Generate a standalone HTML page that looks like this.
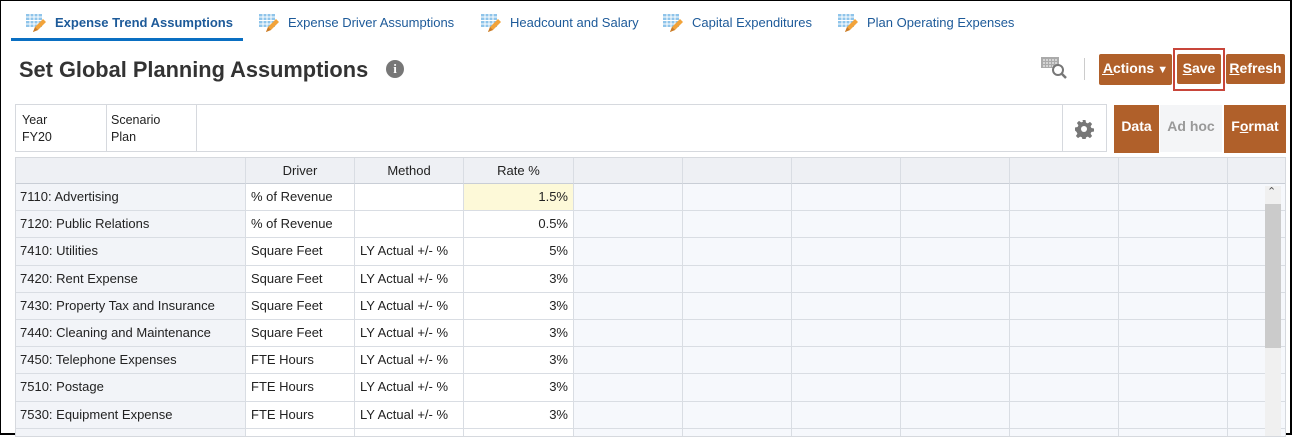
<!DOCTYPE html><html><head><style>
*{box-sizing:border-box}body{margin:0;width:1292px;height:435px;overflow:hidden;font-family:"Liberation Sans",Arial,sans-serif;background:#fff;position:relative}
.frame{position:absolute;left:0;top:0;width:1292px;height:435px;border:1px solid #000;border-right:2px solid #000;border-bottom:2px solid #000;}
.tab{position:absolute;top:15px;font-size:13px;color:#1d5a99;white-space:nowrap}
.tab svg{position:absolute;left:0;top:-4px}
.tab span{position:absolute;left:30px;top:0}
.ab{position:absolute;background:#b0602a;color:#fff;font-weight:bold;font-size:14px;border-radius:2px;text-align:center;line-height:29px}
.ab u{text-decoration:underline}
.g{position:absolute;font-size:12.5px;color:#222}
.c{position:absolute;border-right:1px solid #d9dde3;border-bottom:1px solid #d9dde3;font-size:13px;color:#222;padding:0 5px;line-height:26px;white-space:nowrap;overflow:hidden}
</style></head><body>
<div class="frame"></div>
<svg width="0" height="0" style="position:absolute"><defs><g id="ic"><rect x="1" y="3" width="16" height="13" fill="#8fc4ea"/><path d="M1 6h16M1 9.5h16M1 13h16M5 3v13M9 3v13M13 3v13" stroke="#fff" stroke-width="1"/><path d="M8 21l2-5 8-8 3 3-8 8z" fill="#f2a33a"/><path d="M8 21l2-5 3 3z" fill="#c97c2a"/></g></defs></svg>
<div class="tab" style="left:25px;font-weight:bold"><svg width="22" height="22"><use href="#ic"/></svg><span>Expense Trend Assumptions</span></div>
<div style="position:absolute;left:11px;top:38px;width:232px;height:3px;background:#0a6fc2"></div>
<div class="tab" style="left:258px"><svg width="22" height="22"><use href="#ic"/></svg><span>Expense Driver Assumptions</span></div>
<div class="tab" style="left:480px"><svg width="22" height="22"><use href="#ic"/></svg><span>Headcount and Salary</span></div>
<div class="tab" style="left:662px"><svg width="22" height="22"><use href="#ic"/></svg><span>Capital Expenditures</span></div>
<div class="tab" style="left:837px"><svg width="22" height="22"><use href="#ic"/></svg><span>Plan Operating Expenses</span></div>
<div style="position:absolute;left:19px;top:57px;font-size:21.8px;font-weight:bold;color:#333">Set Global Planning Assumptions</div>
<div style="position:absolute;left:386px;top:60px;width:18px;height:18px;border-radius:50%;background:#777;color:#fff;font-weight:bold;font-size:13px;text-align:center;line-height:18px;font-family:'Liberation Serif',serif">i</div>
<svg style="position:absolute;left:1040px;top:55px" width="30" height="26"><rect x="1" y="2" width="18" height="11" fill="#aaa"/><path d="M3 5h14M3 8h14M3 11h10" stroke="#fff" stroke-dasharray="2 1"/><circle cx="18" cy="15" r="5" fill="#fff" stroke="#777" stroke-width="2"/><path d="M21 18l5 5" stroke="#777" stroke-width="2.5"/></svg>
<div style="position:absolute;left:1084px;top:58px;width:1px;height:22px;background:#ccc"></div>
<div class="ab" style="left:1099px;top:54px;width:73px">Actions<span style="font-size:11px"> ▼</span></div>
<div style="position:absolute;left:1102px;top:74px;width:12px;height:1px;background:#fff"></div>
<div style="position:absolute;left:1173px;top:48px;width:52px;height:43px;border:2px solid #c8453a"></div>
<div class="ab" style="left:1177px;top:54px;width:44px;height:30px"><u>S</u>ave</div>
<div class="ab" style="left:1226px;top:54px;width:59px;height:30px"><u>R</u>efresh</div>
<div style="position:absolute;left:15px;top:104px;width:1092px;height:48px;border:1px solid #d6d9de"></div>
<div style="position:absolute;left:106px;top:105px;width:1px;height:46px;background:#d6d9de"></div>
<div style="position:absolute;left:196px;top:105px;width:1px;height:46px;background:#d6d9de"></div>
<div style="position:absolute;left:1062px;top:105px;width:1px;height:46px;background:#d6d9de"></div>
<div class="g" style="left:22px;top:113px">Year</div><div class="g" style="left:22px;top:130px">FY20</div>
<div class="g" style="left:111px;top:113px">Scenario</div><div class="g" style="left:111px;top:130px">Plan</div>
<svg style="position:absolute;left:1074px;top:119px" width="20" height="20" viewBox="0 0 20 20"><path fill="#777" d="M8.5 1h3l.5 2.6 1.8.8 2.2-1.5 2.1 2.1-1.5 2.2.8 1.8 2.6.5v3l-2.6.5-.8 1.8 1.5 2.2-2.1 2.1-2.2-1.5-1.8.8-.5 2.6h-3l-.5-2.6-1.8-.8-2.2 1.5-2.1-2.1 1.5-2.2-.8-1.8L1 11.5v-3l2.6-.5.8-1.8-1.5-2.2 2.1-2.1 2.2 1.5 1.8-.8z"/><circle cx="10" cy="10" r="3" fill="#fff"/></svg>
<div class="ab" style="left:1114px;top:105px;width:45px;height:48px;line-height:42px;border-radius:0">Data</div>
<div style="position:absolute;left:1160px;top:105px;width:62px;height:47px;background:#f4f5f7;color:#999;font-weight:bold;font-size:14px;text-align:center;line-height:42px">Ad hoc</div>
<div class="ab" style="left:1224px;top:105px;width:62px;height:48px;line-height:42px;border-radius:0">F<u>o</u>rmat</div>
<div id="grid" style="position:absolute;left:15px;top:157px;width:1271px;height:280px;border:1px solid #d6d9de;background:#f6f8fc;overflow:hidden"></div>
<script>
var cols=[15,246,355,464,574,683,792,901,1010,1119,1228,1286];
var g=document.getElementById('grid'),h='';
var rows=[["7110: Advertising","% of Revenue","","1.5%"],["7120: Public Relations","% of Revenue","","0.5%"],["7410: Utilities","Square Feet","LY Actual +/- %","5%"],["7420: Rent Expense","Square Feet","LY Actual +/- %","3%"],["7430: Property Tax and Insurance","Square Feet","LY Actual +/- %","3%"],["7440: Cleaning and Maintenance","Square Feet","LY Actual +/- %","3%"],["7450: Telephone Expenses","FTE Hours","LY Actual +/- %","3%"],["7510: Postage","FTE Hours","LY Actual +/- %","3%"],["7530: Equipment Expense","FTE Hours","LY Actual +/- %","3%"],["","","",""]];
var hd=["","Driver","Method","Rate %"];
for(var i=0;i<11;i++){var x=cols[i]-16,w=cols[i+1]-cols[i];
h+='<div class="c" style="left:'+x+'px;top:0;width:'+w+'px;height:26px;background:#eef0f4;text-align:center;border-bottom:1px solid #c9ced6">'+(hd[i]||'')+'</div>';}
rows.forEach(function(r,j){var y=26+j*27.2;for(var i=0;i<11;i++){var x=cols[i]-16,w=cols[i+1]-cols[i];
var bg=i==0?'#f2f4f8':(i<4?'#fff':'#f6f8fc');if(i==3&&j==0)bg='#fdf9d8';
h+='<div class="c" style="left:'+x+'px;top:'+y+'px;width:'+w+'px;height:27.2px;background:'+bg+';text-align:'+(i==3?'right':'left')+'">'+(r[i]||'')+'</div>';}});
h+='<div style="position:absolute;left:1249px;top:28px;width:16px;height:260px;background:#f0f0f0"></div><div style="position:absolute;left:1249px;top:46px;width:16px;height:144px;background:#cbcbcb"></div><div style="position:absolute;left:1251px;top:27px;font-size:11px;color:#555">&#8963;</div>';
g.innerHTML=h;
</script>
</body></html>
